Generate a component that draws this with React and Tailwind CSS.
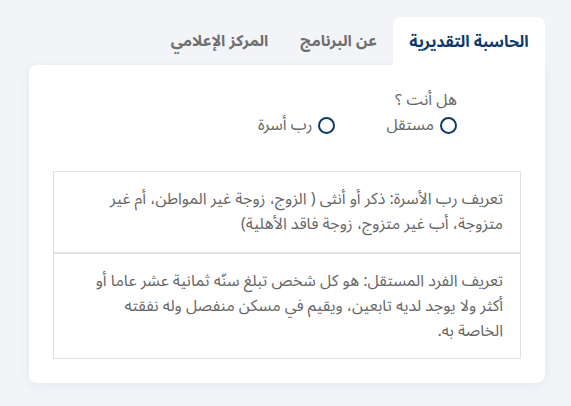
import React, { useState } from 'react';

const tabs = ['الحاسبة التقديرية', 'عن البرنامج', 'المركز الإعلامي'];

const Radio = ({ label, checked, onChange }) => (
  <label className="flex items-center gap-[6px] cursor-pointer">
    <span
      onClick={onChange}
      className="w-[17px] h-[17px] rounded-full border-2 border-[#0d3a6b] flex items-center justify-center"
    >
      {checked && <span className="w-[7px] h-[7px] rounded-full bg-[#0d3a6b]" />}
    </span>
    <span className="text-[16px] leading-[24px] text-[#666]">{label}</span>
  </label>
);

const App = () => {
  const [activeTab, setActiveTab] = useState(0);
  const [type, setType] = useState(null);

  return (
    <div
      dir="rtl"
      className="min-h-screen bg-[#f3f4f8] pt-[17px] pr-[26px] pl-[29px] pb-[24px]"
      style={{ fontFamily: '"Noto Sans Arabic", "DejaVu Sans", sans-serif' }}
    >
      {/* Tabs */}
      <div className="flex h-[48px]">
        {tabs.map((tab, i) => (
          <button
            key={tab}
            onClick={() => setActiveTab(i)}
            className={
              i === activeTab
                ? 'w-[152px] shrink-0 bg-white rounded-t-lg text-[16px] font-bold text-[#0d3a6b] pt-[2px]'
                : 'px-4 shrink-0 text-[15.5px] font-bold text-[#6e6e6e] pt-[2px]'
            }
          >
            {tab}
          </button>
        ))}
      </div>

      {/* Card */}
      <div className="bg-white rounded-b-lg rounded-tl-lg shadow-[0_2px_12px_rgba(30,40,80,0.06)] px-[24px] pt-[23px] pb-[24px]">
        <div className="mr-[64px] mb-[34px]">
          <p className="text-[16px] text-[#666] leading-[24px]">هل أنت ؟</p>
          <div className="flex gap-[51px] mt-[1px]">
            <Radio label="مستقل" checked={type === 'single'} onChange={() => setType('single')} />
            <Radio label="رب أسرة" checked={type === 'family'} onChange={() => setType('family')} />
          </div>
        </div>

        <div className="border border-[#dfe1e5]">
          <p className="px-[17px] py-[15px] text-[16px] leading-[25px] text-[#666]">
            تعريف رب الأسرة: ذكر أو أنثى ( الزوج، زوجة غير المواطن، أم غير متزوجة، أب غير متزوج، زوجة فاقد الأهلية)
          </p>
          <div className="h-[2px] bg-[#dfe1e5]" />
          <p className="px-[17px] pt-[15px] pb-[14px] text-[16px] leading-[25px] text-[#666]">
            تعريف الفرد المستقل: هو كل شخص تبلغ سنّه ثمانية عشر عاما أو أكثر ولا يوجد لديه تابعين، ويقيم في مسكن منفصل وله نفقته
            <br />
            الخاصة به.
          </p>
        </div>
      </div>
    </div>
  );
};

export default App;
